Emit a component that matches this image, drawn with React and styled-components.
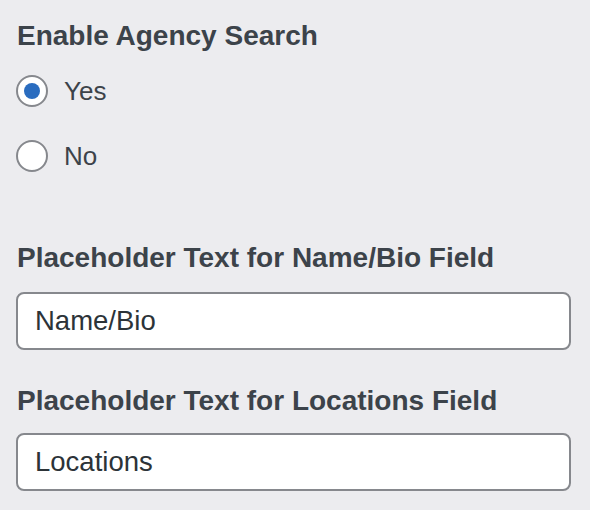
import React, { useState } from "react"
import styled, { createGlobalStyle } from "styled-components"

const GlobalStyles = createGlobalStyle`
  html, body {
    margin: 0;
    padding: 0;
    background: #ececef;
  }
  body {
    font-family: "Liberation Sans", Arial, sans-serif;
    color: #3c434a;
  }
`

const Page = styled.div`
  width: 590px;
  height: 510px;
  padding: 16px 19px 0 16px;
  box-sizing: border-box;
  display: flex;
  flex-direction: column;
`

const Heading = styled.div`
  font-size: 28px;
  font-weight: 700;
  line-height: 40px;
  margin-left: 1px;
  color: #3c434a;
  margin-top: ${(p) => p.$top || 0}px;
  margin-bottom: ${(p) => p.$gap || 0}px;
`

const RadioGroup = styled.div`
  display: flex;
  flex-direction: column;
  gap: 33px;
  margin-top: 19px;
  margin-bottom: 66px;
`

const Option = styled.label`
  display: flex;
  align-items: center;
  gap: 16px;
  font-size: 26px;
  line-height: 32px;
  color: #3c434a;
  cursor: pointer;
`

const Radio = styled.span`
  width: 32px;
  height: 32px;
  box-sizing: border-box;
  border-radius: 50%;
  border: 2px solid #86888d;
  background: #fff;
  display: flex;
  align-items: center;
  justify-content: center;

  &::after {
    content: "";
    width: 16px;
    height: 16px;
    border-radius: 50%;
    background: #2a6cbf;
    display: ${(p) => (p.$checked ? "block" : "none")};
  }
`

const Input = styled.input`
  width: 555px;
  height: 58px;
  box-sizing: border-box;
  border: 2px solid #86888d;
  border-radius: 8px;
  background: #fff;
  padding: 0 17px;
  font-family: "Liberation Sans", Arial, sans-serif;
  font-size: 27.5px;
  color: #2c3338;
  outline: none;
`

export default function App() {
  const [agency, setAgency] = useState("yes")
  const [bio, setBio] = useState("Name/Bio")
  const [loc, setLoc] = useState("Locations")

  return (
    <>
      <GlobalStyles />
      <Page>
        <Heading>Enable Agency Search</Heading>
        <RadioGroup>
          <Option onClick={() => setAgency("yes")}>
            <Radio $checked={agency === "yes"} />
            Yes
          </Option>
          <Option onClick={() => setAgency("no")}>
            <Radio $checked={agency === "no"} />
            No
          </Option>
        </RadioGroup>
        <Heading $gap={14}>Placeholder Text for Name/Bio Field</Heading>
        <Input value={bio} onChange={(e) => setBio(e.target.value)} />
        <Heading $top={31} $gap={12}>Placeholder Text for Locations Field</Heading>
        <Input value={loc} onChange={(e) => setLoc(e.target.value)} />
      </Page>
    </>
  )
}
